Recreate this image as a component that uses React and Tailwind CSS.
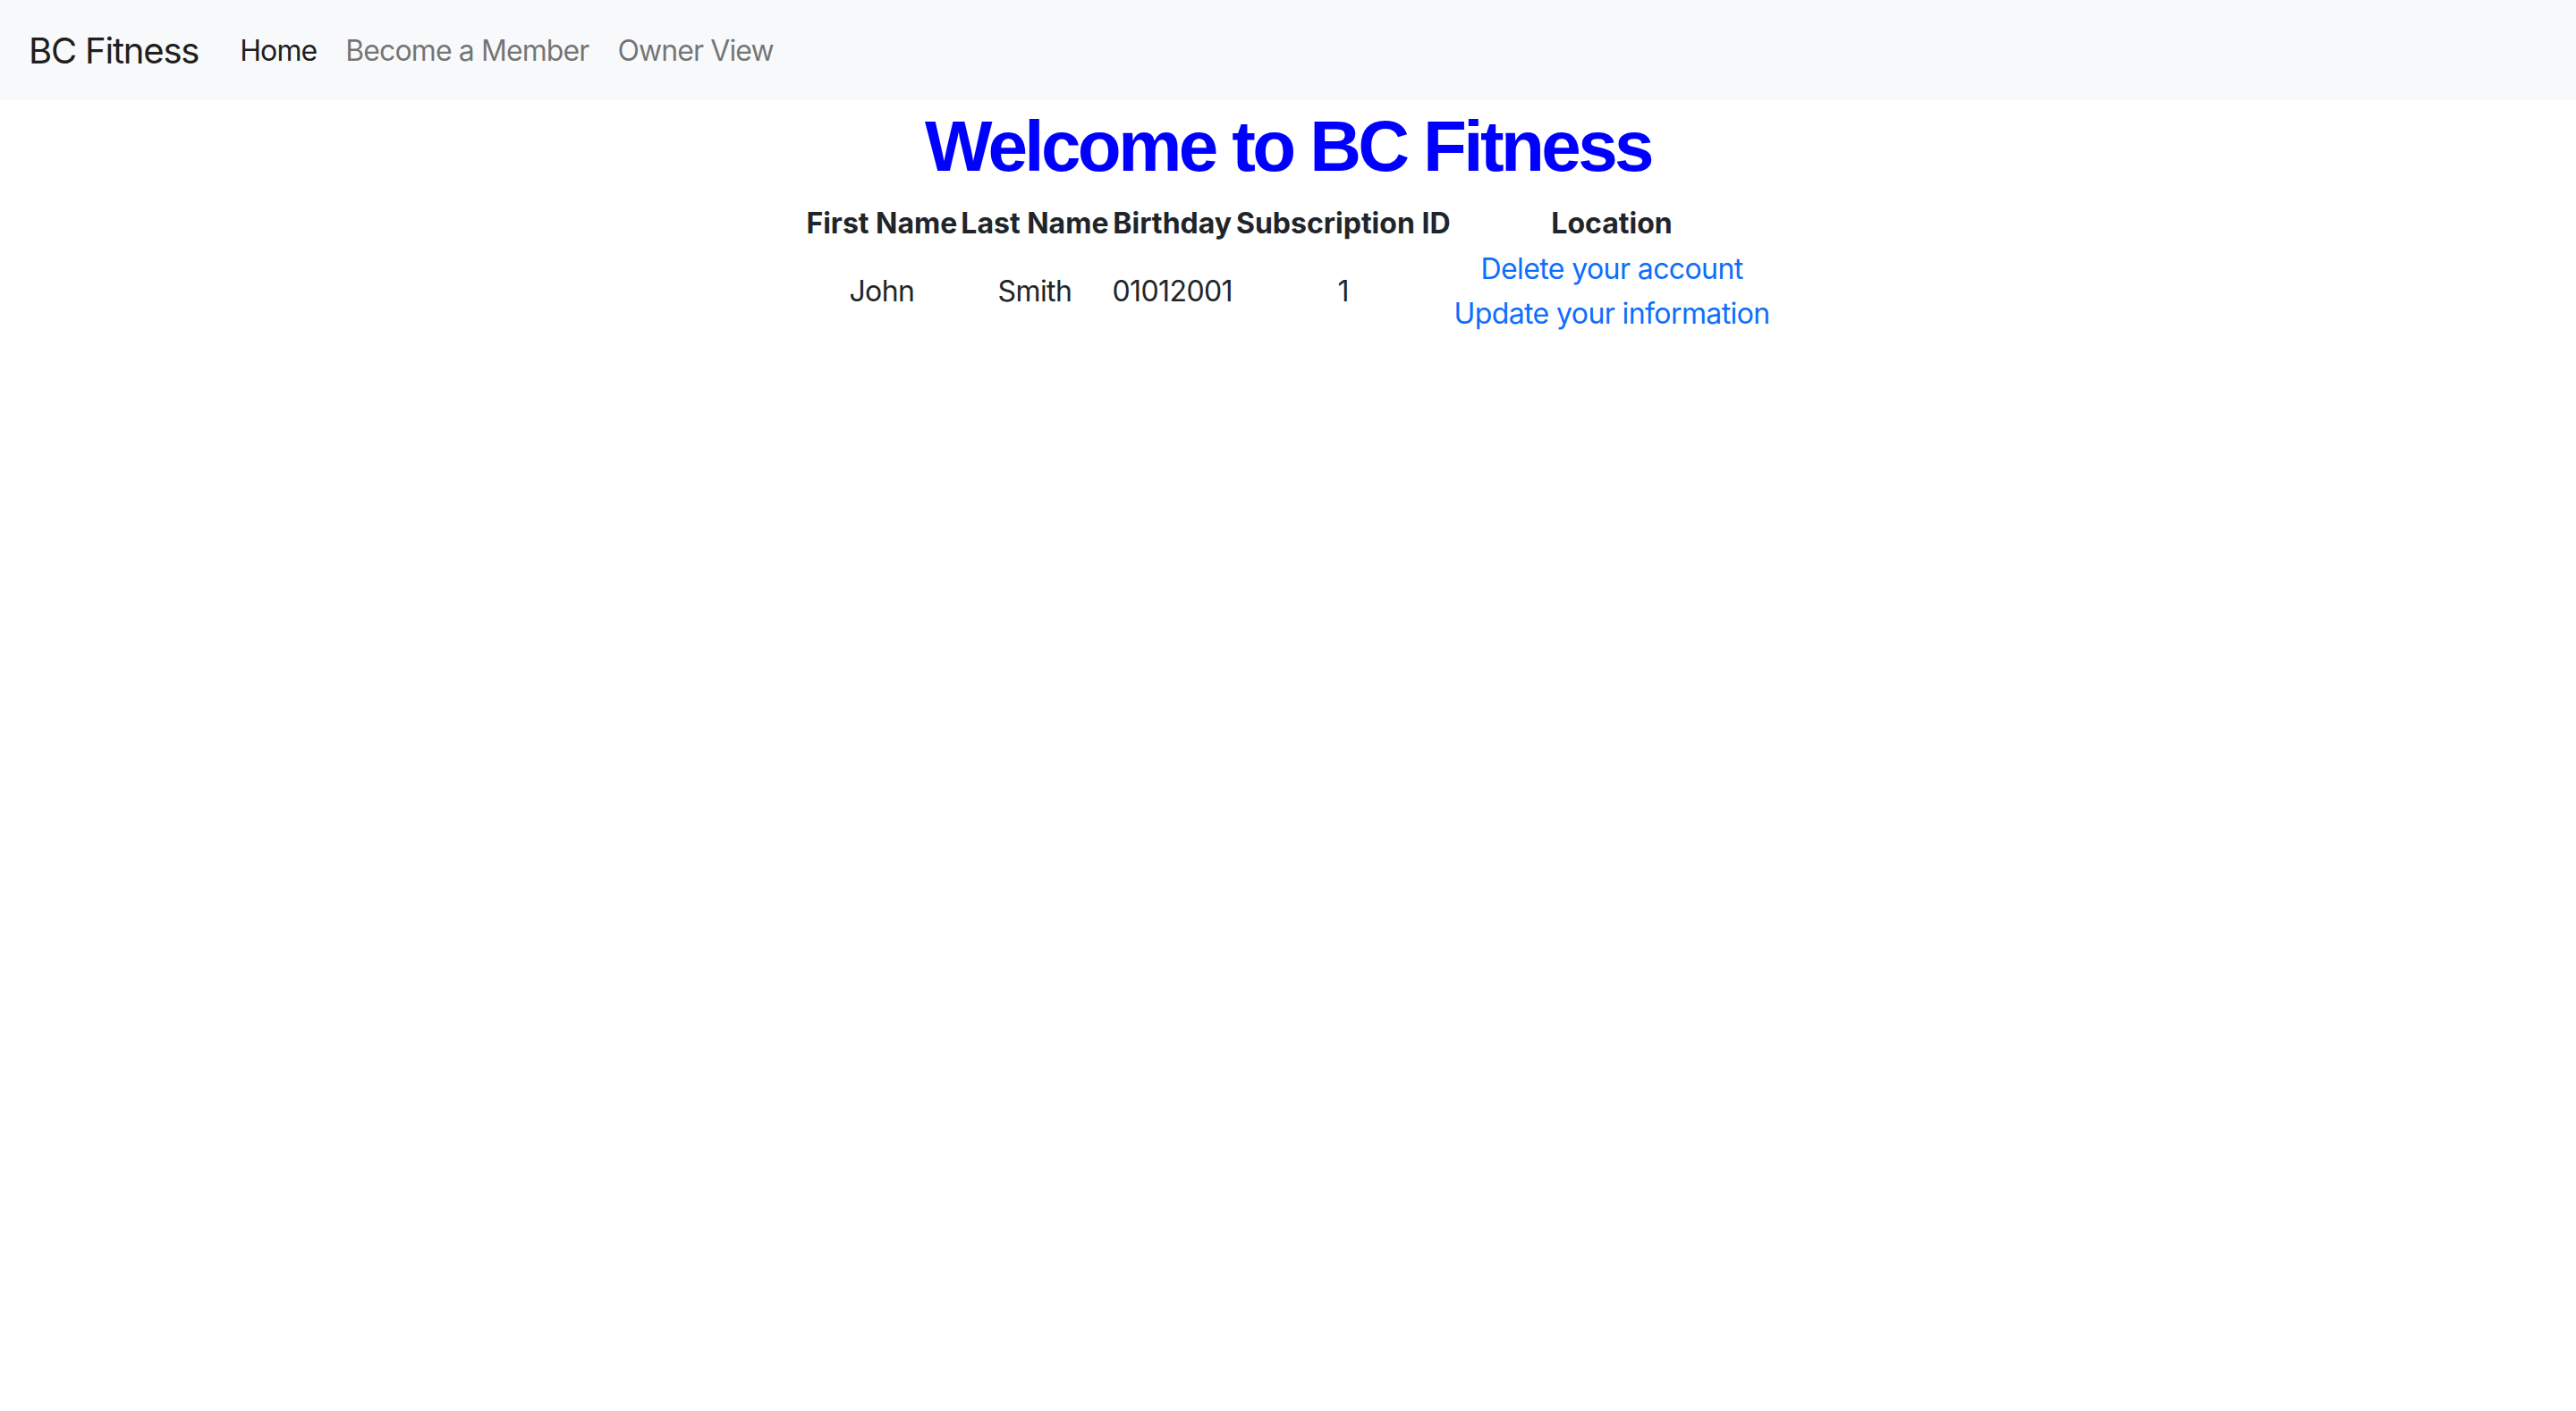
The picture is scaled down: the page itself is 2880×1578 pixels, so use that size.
const members = [
  { first: 'John', last: 'Smith', birthday: '01012001', subscription: '1' },
];

const navLinks = [
  { name: 'Home', active: true },
  { name: 'Become a Member', active: false },
  { name: 'Owner View', active: false },
];

const App = () => {
  return (
    <div className="min-h-screen bg-white text-[#212529] font-['Inter',sans-serif] text-[32px] leading-[1.5]">
      {/* Navbar */}
      <nav className="bg-[#f8f9fa] pt-[17px] pb-[15px]">
        <div className="flex items-center px-[32px]">
          <a className="text-[40px] leading-[60px] py-[10px] mr-[30px] text-[rgba(0,0,0,0.9)] tracking-[-1.2px]" href="#">
            BC Fitness
          </a>
          <ul className="flex items-center">
            {navLinks.map((link) => (
              <li key={link.name}>
                <a
                  href="#"
                  className={`block px-[16px] py-[16px] leading-[48px] tracking-[-0.9px] ${
                    link.active ? 'text-[rgba(0,0,0,0.9)]' : 'text-[rgba(0,0,0,0.55)]'
                  }`}
                >
                  {link.name}
                </a>
              </li>
            ))}
          </ul>
        </div>
      </nav>

      {/* Content */}
      <div className="flex flex-col items-center">
        <h1 className="font-['Liberation_Sans',Arial,sans-serif] font-bold text-[80px] leading-[96px] tracking-[-3.6px] text-[#0000ff] pt-[4px] mb-[13px]">
          Welcome to BC Fitness
        </h1>
        <table className="border-collapse">
          <thead>
            <tr>
              {['First Name', 'Last Name', 'Birthday', 'Subscription ID', 'Location'].map((h) => (
                <th key={h} className="font-bold text-center px-[2px] py-[1px] leading-[48px] tracking-[0px]">
                  {h}
                </th>
              ))}
            </tr>
          </thead>
          <tbody className="tracking-[-0.6px]">
            {members.map((m) => (
              <tr key={m.first}>
                <td className="text-center align-middle px-[2px] py-[1px]">{m.first}</td>
                <td className="text-center align-middle px-[2px] py-[1px]">{m.last}</td>
                <td className="text-center align-middle px-[2px] py-[1px]">{m.birthday}</td>
                <td className="text-center align-middle px-[2px] py-[1px]">{m.subscription}</td>
                <td className="text-center align-middle px-[2px] py-[1px]">
                  <div className="flex flex-col items-center">
                    <a href="#" className="text-[#0d6efd] leading-[50px]">Delete your account</a>
                    <a href="#" className="text-[#0d6efd] leading-[50px]">Update your information</a>
                  </div>
                </td>
              </tr>
            ))}
          </tbody>
        </table>
      </div>
    </div>
  );
};

export default App;
